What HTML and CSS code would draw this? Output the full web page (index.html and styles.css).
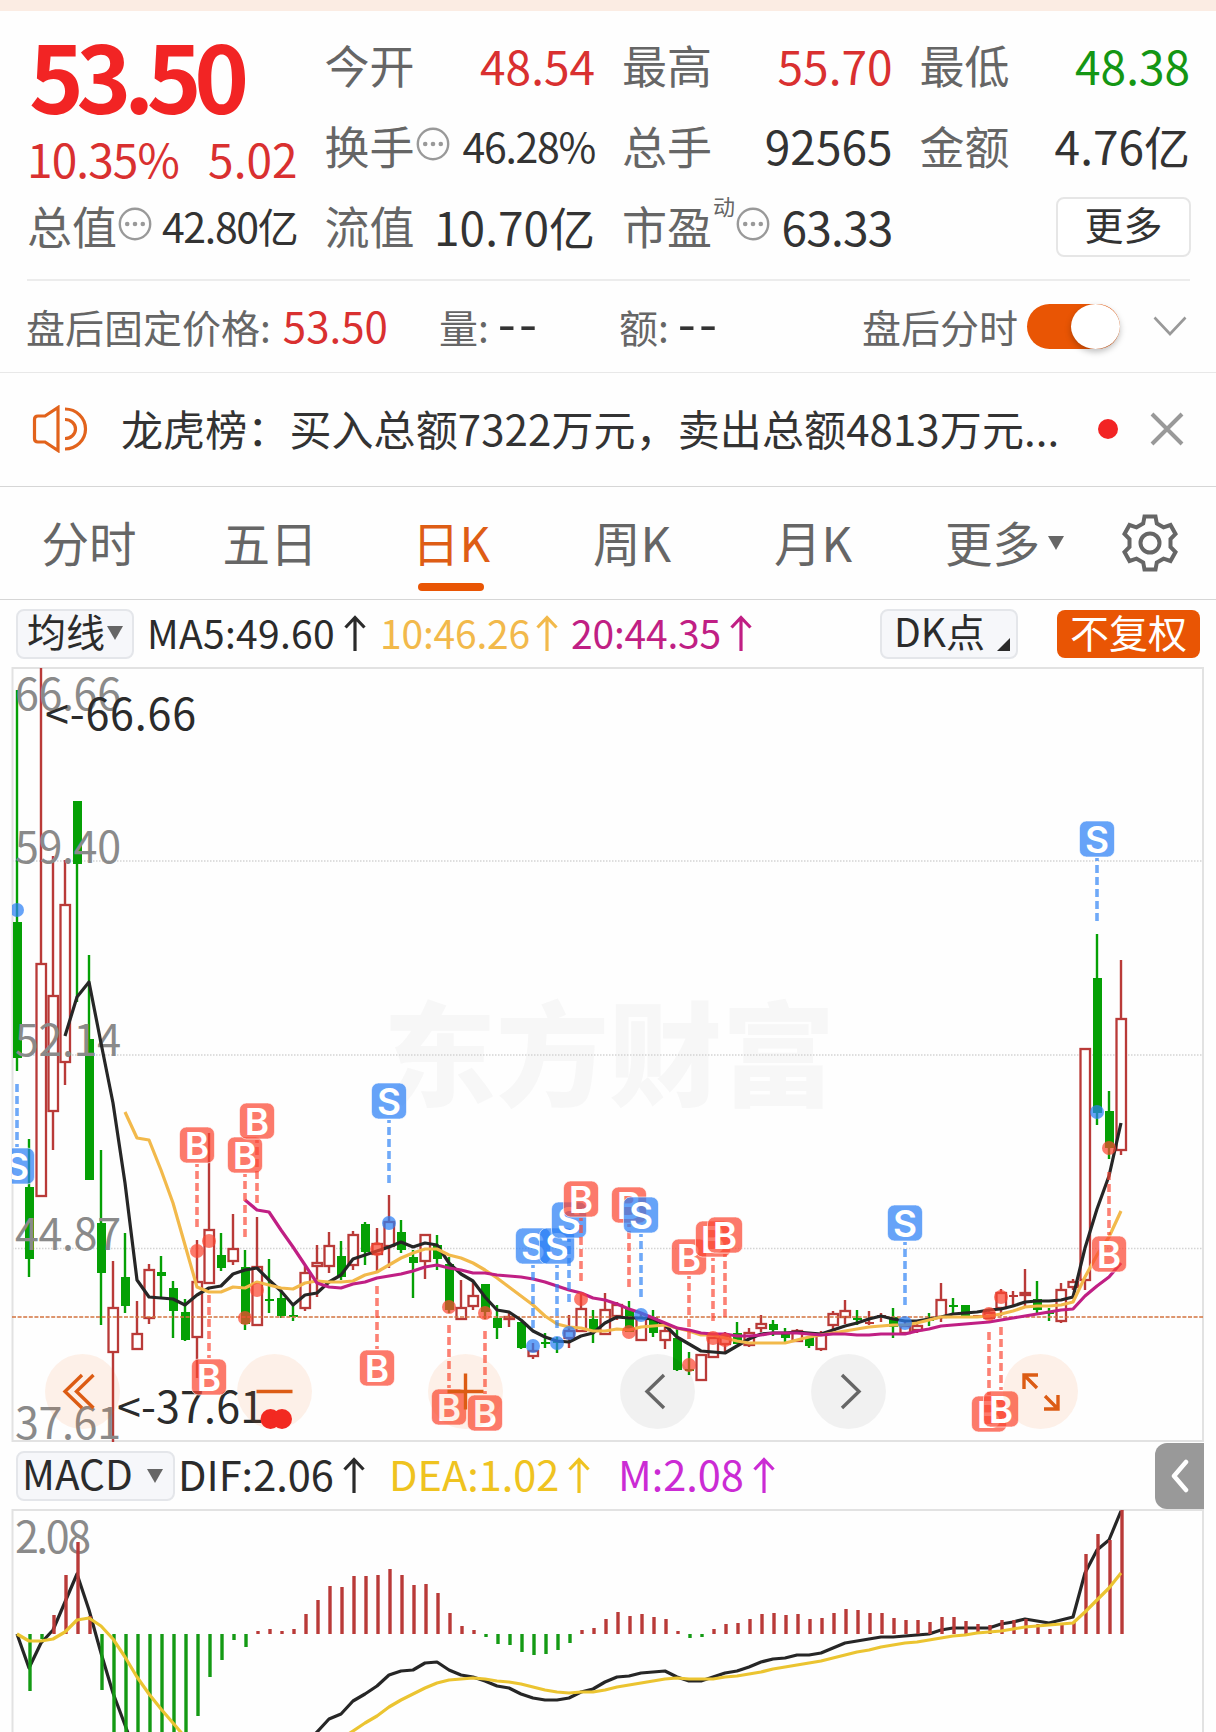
FILE: index.html
```html
<!DOCTYPE html>
<html lang="zh-CN">
<head>
  <meta charset="UTF-8" />
  <meta name="viewport" content="width=device-width, initial-scale=1.0"/>
  <title>日K</title>
  <link rel="stylesheet" href="styles.css">
</head>
<body>

  <!-- Shared icons -->
  <svg class="defs" width="0" height="0">
    <symbol id="i-more" viewBox="0 0 34 34">
      <circle cx="17" cy="17" r="15.2" fill="none" stroke="#999" stroke-width="2.4"/>
      <circle cx="9.2" cy="17" r="2.3" fill="#999"/><circle cx="17" cy="17" r="2.3" fill="#999"/><circle cx="24.8" cy="17" r="2.3" fill="#999"/>
    </symbol>
    <symbol id="i-up" viewBox="0 0 22 36">
      <path d="M11 36V3M1.5 12.5L11 2.5L20.5 12.5" fill="none" stroke="currentColor" stroke-width="3.2"/>
    </symbol>
  </svg>

  <div class="top-strip"></div>

  <!-- Quote -->
  <section class="quote">
    <div class="price-box">
      <div class="price">53.50</div>
      <div class="change"><span>10.35%</span><span>5.02</span></div>
    </div>
    <div class="cell"><span class="label">今开</span><span class="red">48.54</span></div>
    <div class="cell"><span class="label">最高</span><span class="red">55.70</span></div>
    <div class="cell"><span class="label">最低</span><span class="green">48.38</span></div>
    <div class="cell"><span class="label">换手<svg class="more-icon"><use href="#i-more"/></svg></span><span class="small">46.28%</span></div>
    <div class="cell"><span class="label">总手</span><span>92565</span></div>
    <div class="cell"><span class="label">金额</span><span>4.76亿</span></div>
    <div class="cell"><span class="label">总值<svg class="more-icon"><use href="#i-more"/></svg></span><span class="small">42.80亿</span></div>
    <div class="cell"><span class="label">流值</span><span>10.70亿</span></div>
    <div class="cell"><span class="label">市盈<sup>动</sup><svg class="more-icon"><use href="#i-more"/></svg></span><span class="pe">63.33</span></div>
    <div class="cell end"><button class="more-btn">更多</button></div>
  </section>

  <!-- After hours -->
  <section class="after">
    <span class="after-price">盘后固定价格:<b>53.50</b></span>
    <span class="after-vol">量:<i>--</i></span>
    <span class="after-amt">额:<i>--</i></span>
    <span class="after-time">盘后分时</span>
    <span class="toggle"></span>
    <svg class="chevron" viewBox="0 0 34 20"><path d="M1.5 1.5L17 18L32.5 1.5" fill="none" stroke="#999" stroke-width="2.6"/></svg>
  </section>

  <!-- News -->
  <section class="news">
    <svg class="speaker" viewBox="0 0 56 48">
      <g fill="none" stroke="#e2631c" stroke-width="3.2">
        <path d="M2.500 14.500Q2.500 11 6 11H13L26 2.500V45.500L13 37H6Q2.500 37 2.500 33.500Z"/>
        <path d="M33 14.500A10.500 9.500 0 0 1 33 33.500M33 4A20.500 20 0 0 1 33 44"/>
      </g>
    </svg>
    <span class="news-text">龙虎榜：买入总额7322万元，卖出总额4813万元...</span>
    <span class="dot"></span>
    <svg class="close" viewBox="0 0 34 34"><path d="M2 2L32 32M32 2L2 32" stroke="#999" stroke-width="4"/></svg>
  </section>

  <!-- Tabs -->
  <nav class="tabs">
    <a class="tab">分时</a>
    <a class="tab">五日</a>
    <a class="tab active">日K</a>
    <a class="tab">周K</a>
    <a class="tab">月K</a>
    <a class="tab wide">更多<span class="caret"></span></a>
    <a class="gear">
      <svg viewBox="0 0 56 58">
        <g fill="none" stroke="#666" stroke-width="4">
          <path d="M22.500 2.500H33.500L34.800 9.500L41.500 13.300L48.500 11L53.500 20L48.500 25V33L53.500 38L48.500 47L41.500 44.700L34.800 48.500L33.500 55.500H22.500L21.200 48.500L14.500 44.700L7.500 47L2.500 38L7.500 33V25L2.500 20L7.500 11L14.500 13.300L21.200 9.500Z"/>
          <circle cx="28" cy="29" r="9.500"/>
        </g>
      </svg>
    </a>
  </nav>

  <!-- Moving averages -->
  <div class="indicator ma">
    <span class="pill">均线<span class="caret"></span></span>
    <span class="ma5">MA5:49.60<svg class="up"><use href="#i-up"/></svg></span>
    <span class="ma10">10:46.26<svg class="up"><use href="#i-up"/></svg></span>
    <span class="ma20">20:44.35<svg class="up"><use href="#i-up"/></svg></span>
    <span class="pill dk">DK点<span class="corner"></span></span>
    <span class="pill fq">不复权</span>
  </div>

  <!-- Candles -->
  <div class="chart">
    <svg id="kline" width="1216" height="775" viewBox="0 667 1216 775"></svg>
    <div class="tools">
      <span class="tool"><svg viewBox="0 0 75 75"><path d="M37 21L20 37.500L37 54M48.500 21L31.500 37.500L48.500 54"/></svg></span>
      <span class="tool"><svg viewBox="0 0 75 75"><path d="M19.500 37.500H55.500"/></svg></span>
      <span class="tool"><svg viewBox="0 0 75 75"><path d="M19.500 37.500H55.500M37.500 19.500V55.500"/></svg></span>
      <span class="tool gray"><svg viewBox="0 0 75 75"><path d="M44 21L27 37.500L44 54"/></svg></span>
      <span class="tool gray"><svg viewBox="0 0 75 75"><path d="M31 21L48 37.500L31 54"/></svg></span>
      <span class="tool"><svg viewBox="0 0 75 75"><path d="M35 21H21V35M21 21L34 34M41 55H55V41M55 55L42 42"/></svg></span>
    </div>
  </div>

  <!-- MACD -->
  <div class="indicator macd">
    <span class="pill">MACD<span class="caret"></span></span>
    <span class="dif">DIF:2.06<svg class="up"><use href="#i-up"/></svg></span>
    <span class="dea">DEA:1.02<svg class="up"><use href="#i-up"/></svg></span>
    <span class="m">M:2.08<svg class="up"><use href="#i-up"/></svg></span>
    <span class="drawer"><svg viewBox="0 0 20 34"><path d="M16 3L4 17L16 31" fill="none" stroke="#fff" stroke-width="4.500" stroke-linecap="round" stroke-linejoin="round"/></svg></span>
  </div>
  <svg id="macd" width="1216" height="223" viewBox="0 1509 1216 223"></svg>

  <script src="chart.js"></script>
</body>
</html>
```

FILE: styles.css
```css
* {
  box-sizing: border-box;
}

body {
  margin: 0;
  width: 1216px;
  height: 1732px;
  overflow: hidden;
  background: #fefefe;
  color: #333;
  font-family: "Noto Sans CJK SC", sans-serif;
  line-height: 1;
}

svg {
  display: block;
  flex: none;
}

.defs {
  position: absolute;
}

.top-strip {
  height: 11px;
  background: #fbece3;
}

.red {
  color: #d93030;
}

.green {
  color: #149614;
}

/* Quote */
.quote {
  display: grid;
  grid-template-columns: repeat(4, 1fr);
  grid-template-rows: 81px 80px 81px;
  column-gap: 27px;
  height: 270px;
  margin: 0 26px 0 27px;
  padding-top: 16px;
  border-bottom: 2px solid #ececec;
}

.price-box {
  grid-row: span 2;
}

.price {
  height: 102px;
  padding-left: 2px;
  font-size: 93px;
  font-weight: 700;
  line-height: 94px;
  letter-spacing: -7.4px;
  color: #f22424;
}

.change {
  display: flex;
  justify-content: space-between;
  font-size: 46px;
  line-height: 59px;
  color: #d93030;
}

.change span:first-child {
  letter-spacing: -0.9px;
}

.cell {
  display: flex;
  justify-content: space-between;
  align-items: center;
  padding-bottom: 6px;
  font-size: 46px;
  white-space: nowrap;
}

.cell .small {
  font-size: 41px;
  letter-spacing: -1.3px;
}

.cell .pe {
  letter-spacing: -0.8px;
}

.label {
  display: flex;
  align-items: center;
  font-size: 45px;
  color: #666;
}

.label sup {
  align-self: flex-start;
  margin: -9px 0 0 1px;
  font-size: 22px;
  line-height: 22px;
}

.more-icon {
  width: 34px;
  height: 34px;
  margin: -3px 0 0 1px;
}

.end {
  justify-content: flex-end;
}

.more-btn {
  width: 135px;
  height: 60px;
  margin: 2px -1px 0 0;
  padding: 0 0 8px;
  border: 2px solid #e6e6e6;
  border-radius: 8px;
  background: #fff;
  color: #333;
  font: 39px/48px "Noto Sans CJK SC", sans-serif;
}

/* After hours */
.after {
  display: flex;
  align-items: center;
  height: 92px;
  padding: 0 0 2px 26px;
  border-bottom: 1px solid #e8e8e8;
  font-size: 39px;
  line-height: 50px;
  color: #666;
  white-space: nowrap;
}

.after b {
  margin-left: 12px;
  font-size: 42px;
  line-height: 40px;
  font-weight: 400;
  color: #d93030;
}

.after i {
  margin-left: 9px;
  font-style: normal;
  letter-spacing: 3px;
  color: #333;
  font-size: 52px;
  line-height: 30px;
}

.after-price {
  width: 413px;
}

.after-vol {
  width: 180px;
}

.after-amt {
  width: 243px;
}

.toggle {
  display: flex;
  justify-content: flex-end;
  width: 93px;
  height: 45px;
  margin: 2px 0 0 9px;
  border-radius: 23px;
  background: #e95504;
}

.toggle::after {
  content: "";
  width: 49px;
  height: 45px;
  border-radius: 50%;
  background: #fff;
  box-shadow: 0 3px 6px rgba(0, 0, 0, 0.25);
}

.chevron {
  width: 34px;
  height: 20px;
  margin-left: 33px;
}

/* News */
.news {
  display: flex;
  align-items: center;
  height: 114px;
  padding: 0 0 2px 32px;
  border-bottom: 1px solid #d6d6d6;
  font-size: 42px;
  white-space: nowrap;
}

.speaker {
  width: 56px;
  height: 48px;
}

.news-text {
  width: 977px;
  margin: -2px 0 0 33px;
  letter-spacing: 0.1px;
}

.dot {
  width: 20px;
  height: 20px;
  border-radius: 50%;
  background: #f22424;
}

.close {
  width: 34px;
  height: 34px;
  margin-left: 32px;
}

/* Tabs */
.tabs {
  display: flex;
  height: 113px;
  border-bottom: 1px solid #d6d6d6;
  font-size: 47.5px;
  color: #666;
}

.tab {
  display: flex;
  flex-direction: column;
  align-items: center;
  width: 181px;
  padding: 31px 3px 0 0;
}

.tab.active {
  color: #de5d15;
}

.tab.active::after {
  content: "";
  width: 66px;
  height: 8px;
  margin-top: 17px;
  border-radius: 4px;
  background: #e95504;
}

.tab.wide {
  flex-direction: row;
  align-items: flex-start;
  justify-content: center;
  width: 202px;
}

.caret {
  border: 8px solid transparent;
  border-top: 14px solid #666;
  border-bottom: 0;
}

.tab .caret {
  margin: 18px 0 0 8px;
}

.gear {
  padding: 27px 0 0 15px;
}

.gear svg {
  width: 56px;
  height: 58px;
}

/* Indicator rows */
.indicator {
  display: flex;
  align-items: center;
  height: 67px;
  padding-left: 16px;
  font-size: 39px;
  white-space: nowrap;
}

.indicator > span {
  display: flex;
  align-items: center;
  flex: none;
  padding-bottom: 3px;
}

.indicator .pill {
  height: 50px;
  padding: 0 0 6px 9px;
  border: 2px solid #e4e6ea;
  border-radius: 8px;
  background: #f6f7fa;
  color: #2b2b2b;
}

.up {
  width: 22px;
  height: 36px;
  margin: 2px 0 0 9px;
}

.ma .pill {
  width: 118px;
}

.pill .caret {
  margin: 5px 0 0 2px;
}

.ma5 {
  width: 233px;
  margin-left: 13px;
  letter-spacing: 0.3px;
  color: #2b2b2b;
}

.ma10 {
  width: 191px;
  letter-spacing: -0.2px;
  color: #f2b94b;
}

.ma10 .up {
  margin-left: 6px;
}

.ma20 {
  width: 309px;
  letter-spacing: -0.2px;
  color: #c01f84;
}

.ma .dk {
  width: 138px;
  padding-left: 12px;
}

.corner {
  margin: 28px 0 0 12px;
  border-left: 13px solid transparent;
  border-bottom: 13px solid #2b2b2b;
}

.ma .fq {
  justify-content: center;
  width: 143px;
  height: 48px;
  margin-left: 39px;
  padding: 0 0 4px;
  border: 0;
  background: #e95504;
  color: #fff;
}

.macd {
  font-size: 41.5px;
}

.macd .pill {
  width: 159px;
  padding: 0 0 5px 4px;
  font-size: 40.5px;
}

.macd .caret {
  margin-left: 14px;
}

.dif {
  width: 211px;
  margin-left: 3px;
  color: #2b2b2b;
}

.dea {
  width: 229px;
  color: #efc320;
}

.m {
  width: 537px;
  color: #cb2bd4;
}

.indicator .drawer {
  justify-content: center;
  width: 49px;
  height: 66px;
  padding: 0;
  border-radius: 12px 0 0 12px;
  background: #999;
}

.drawer svg {
  width: 20px;
  height: 34px;
}

/* Chart */
.chart {
  position: relative;
  height: 775px;
}

.tools {
  position: absolute;
  left: 45px;
  top: 687px;
  display: flex;
  gap: 116.6px;
}

.tool {
  width: 75px;
  height: 75px;
  border-radius: 50%;
  background: rgba(240, 95, 15, 0.09);
}

.tool.gray {
  background: rgba(0, 0, 0, 0.05);
}

.tool path {
  fill: none;
  stroke: #dc5c14;
  stroke-width: 3.4;
}

.tool.gray path {
  stroke: #666;
}

.axis {
  font-size: 43px;
  fill: #8a8a8a;
}

.mark {
  font-size: 43px;
  fill: #2b2b2b;
}

.watermark {
  font-size: 113px;
  font-weight: 900;
  fill: #f7f7f7;
}

.badge-text {
  font: 600 37px Inter, sans-serif;
  fill: #fff;
  text-anchor: middle;
}
```

FILE: chart.js
```js
const RED = '#b93a38';
const GREEN = '#05a005';
const x = i => 17 + 12 * i;

// [up, high, body top, body bottom, low]
const candles = [
  [0,690,922,1058,1071],[0,1139,1187,1259,1277],[1,668,963,1197,1197],[1,856,995,1112,1150],[1,860,904,1063,1085],
  [0,801,801,864,1002],[0,955,1039,1180,1180],[0,1150,1223,1273,1325],[1,1261,1307,1353,1442],[0,1233,1277,1306,1313],
  [1,1301,1333,1350,1350],[1,1264,1269,1319,1324],[0,1256,1272,1276,1297],[0,1281,1288,1311,1338],[0,1299,1312,1340,1341],
  [1,1240,1281,1338,1378],[1,1133,1229,1284,1284],[0,1233,1255,1268,1271],[1,1214,1248,1262,1265],[0,1250,1267,1324,1330],
  [1,1217,1266,1326,1326],[0,1259,1299,1301,1313],[0,1290,1298,1316,1318],[0,1305,1315,1317,1321],[1,1266,1272,1309,1311],
  [1,1245,1262,1267,1297],[1,1232,1245,1267,1273],[0,1241,1256,1277,1280],[1,1231,1234,1266,1270],[0,1222,1224,1252,1265],
  [1,1228,1243,1255,1271],[1,1195,1221,1247,1268],[0,1220,1232,1250,1253],[0,1250,1257,1263,1298],[1,1234,1234,1262,1279],
  [0,1235,1245,1259,1270],[0,1257,1264,1310,1313],[1,1280,1307,1320,1320],[1,1282,1295,1307,1310],[0,1284,1284,1312,1319],
  [0,1305,1318,1328,1339],[1,1313,1316,1320,1327],[0,1322,1322,1348,1349],[1,1343,1350,1357,1359],[0,1333,1342,1344,1348],
  [0,1337,1341,1343,1353],[1,1315,1330,1339,1348],[1,1293,1308,1332,1332],[0,1310,1319,1330,1343],[1,1293,1309,1335,1335],
  [1,1302,1304,1317,1320],[0,1301,1309,1332,1332],[1,1313,1317,1341,1341],[0,1310,1317,1333,1337],[1,1327,1330,1341,1349],
  [0,1329,1338,1370,1371],[0,1352,1369,1371,1375],[1,1354,1354,1381,1381],[1,1337,1337,1358,1358],[1,1332,1335,1345,1352],
  [0,1322,1333,1344,1344],[1,1328,1332,1346,1347],[1,1315,1323,1329,1332],[0,1320,1324,1330,1336],[0,1328,1333,1338,1342],
  [1,1329,1330,1342,1342],[0,1337,1337,1346,1348],[1,1331,1333,1350,1351],[1,1311,1313,1326,1329],[1,1300,1310,1318,1324],
  [0,1310,1318,1320,1325],[1,1311,1322,1323,1325],[1,1313,1315,1317,1322],[0,1308,1317,1327,1338],[1,1322,1325,1334,1334],
  [1,1323,1325,1331,1333],[0,1313,1319,1320,1326],[1,1283,1299,1318,1322],[0,1298,1305,1307,1313],[0,1305,1305,1317,1317],
  [1,1315,1315,1317,1317],[1,1311,1312,1319,1319],[1,1289,1292,1309,1316],[1,1291,1295,1297,1306],[1,1269,1292,1296,1306],
  [0,1281,1299,1310,1314],[0,1308,1312,1313,1321],[1,1283,1289,1322,1323],[1,1279,1281,1288,1290],[1,1048,1048,1281,1290],
  [0,934,978,1113,1125],[0,1091,1111,1148,1159],[1,960,1018,1151,1155]
];

const ma5 = [1036,997,982,1043,1103,1183,1280,1297,1298,1299,1305,1295,1288,1286,1274,1270,1268,1280,1291,1305,1295,1293,1282,1275,1259,1255,1251,1247,1242,1247,1243,1245,1263,1274,1281,1297,1310,1312,1320,1331,1337,1341,1342,1336,1333,1323,1317,1318,1318,1319,1325,1337,1344,1351,1352,1353,1346,1339,1334,1333,1333,1332,1333,1334,1330,1326,1323,1319,1316,1319,1321,1321,1319,1317,1314,1313,1312,1310,1309,1306,1302,1301,1301,1300,1297,1248,1209,1176,1123];
const ma10 = [1112,1138,1140,1170,1203,1245,1287,1292,1292,1287,1288,1282,1285,1288,1289,1283,1281,1282,1282,1281,1275,1272,1265,1258,1253,1249,1249,1255,1258,1263,1270,1278,1287,1296,1305,1316,1324,1327,1328,1331,1331,1329,1330,1327,1326,1325,1328,1331,1335,1335,1338,1341,1343,1343,1343,1343,1340,1337,1335,1333,1331,1329,1327,1326,1325,1325,1323,1320,1317,1317,1317,1317,1316,1314,1311,1307,1306,1306,1305,1302,1277,1255,1237,1211];
const ma20 = [1200,1210,1212,1230,1247,1265,1283,1287,1288,1284,1282,1278,1276,1274,1271,1267,1265,1268,1270,1273,1273,1275,1276,1277,1279,1282,1286,1290,1293,1298,1300,1304,1309,1313,1318,1323,1328,1330,1333,1334,1334,1336,1336,1335,1333,1333,1333,1334,1335,1334,1334,1335,1335,1334,1334,1334,1331,1329,1326,1325,1324,1323,1322,1320,1318,1316,1314,1312,1310,1309,1296,1286,1277,1263];

// [index, type, badge y, dot y] - the dashes run from the badge towards the dot
const trades = [
  [0,'S',1166,910],[15,'B',1145,1251],[16,'B',1377,1241],[19,'B',1155,1318],[20,'B',1121,1290],[31,'S',1101,1223],[30,'B',1368,1249],
  [36,'B',1407,1307],[39,'B',1413,1313],[43,'S',1246,1346],[45,'S',1246,1343],[46,'S',1220,1333],[47,'B',1199,1299],
  [51,'B',1205,1332],[52,'S',1215,1315],[56,'B',1257,1365],[58,'B',1239,1338],[59,'B',1235,1340],[74,'S',1223,1323],
  [81,'B',1414,1314],[82,'B',1409,1297],[90,'S',839,1112],[91,'B',1254,1148]
];

const line = (start, ys, color) =>
  `<polyline points="${ys.map((y, i) => x(start + i) + ',' + y).join(' ')}" fill="none" stroke="${color}" stroke-width="3.2" stroke-linejoin="round"/>`;

function drawKline() {
  let s = '<defs><clipPath id="frame"><rect x="12" y="667" width="1192" height="776"/></clipPath></defs>';
  s += '<text class="watermark" x="383" y="1097">东方财富</text>';
  [861, 1055, 1248.5].forEach(y => {
    s += `<path d="M12 ${y}H1203" stroke="#d4d4d4" stroke-width="1.5" stroke-dasharray="1.5 1.5"/>`;
  });
  s += '<path d="M12.5 1441V668H1203V1441Z" fill="none" stroke="#e2e2e2" stroke-width="2"/>';

  candles.forEach(([up, high, top, bottom, low], i) => {
    const c = up ? RED : GREEN;
    const cx = x(i);
    s += `<path d="M${cx} ${high}V${top}M${cx} ${bottom}V${low}" stroke="${c}" stroke-width="2.4"/>`;
    if (up && bottom - top > 3) {
      s += `<rect x="${cx - 4.5}" y="${top + 1}" width="9.5" height="${bottom - top - 2}" fill="#fff" stroke="${c}" stroke-width="2.3"/>`;
    } else {
      s += `<rect x="${cx - 4}" y="${top}" width="9" height="${Math.max(bottom - top, 2)}" fill="${c}"/>`;
    }
  });
  s += '<path d="M12 1317H1203" stroke="#d2733f" stroke-width="1.4" stroke-dasharray="4 1.6"/>';
  [['66.66', 710], ['59.40', 863], ['52.14', 1056], ['44.87', 1250], ['37.61', 1439]].forEach(([t, y]) => {
    s += `<text class="axis" x="15" y="${y}" textLength="106">${t}</text>`;
  });
  s += line(4, ma5, '#262626') + line(9, ma10, '#f2b94b') + line(19, ma20, '#c01f84');
  s += '<text class="mark" x="45" y="730" textLength="151">&lt;-66.66</text>';
  s += '<text class="mark" x="117" y="1423" textLength="147">&lt;-37.61</text>';
  s += '<g fill="#f22424"><circle cx="270.500" cy="1419" r="10"/><circle cx="282" cy="1419" r="10"/></g>';

  s += '<g clip-path="url(#frame)">';
  trades.forEach(([i, type, by, dy]) => {
    const c = type === 'S' ? '#2b80f5' : '#fb4632';
    const below = i === 0 || [16, 30, 36, 39, 81, 82, 91].includes(i);
    const d = below ? -1 : 1;
    const cx = x(i);
    s += `<circle cx="${cx}" cy="${dy}" r="7" fill="${c}" fill-opacity="0.72"/>`;
    s += `<path d="M${cx} ${by + 82 * d}V${by + 19 * d}" stroke="${c}" stroke-opacity="0.68" stroke-width="3.600" stroke-dasharray="8 4"/>`;
    s += `<rect x="${cx - 17.5}" y="${by - 18}" width="35" height="36" rx="7" fill="${c}" fill-opacity="0.72" stroke="#fff" stroke-opacity="0.6"/>`;
    s += `<text class="badge-text" x="${cx}" y="${by + 13.5}">${type}</text>`;
  });
  s += '</g>';
  document.getElementById('kline').innerHTML = s;
}

const bars = [1634,1691,1639,1615,1575,1542,1616,1690,1740,1740,1740,1740,1740,1740,1740,1716,1677,1660,1640,1647,1631,1629,1631,1629,1614,1600,1586,1587,1576,1576,1575,1569,1575,1585,1584,1593,1613,1626,1630,1637,1644,1645,1652,1655,1654,1650,1643,1630,1628,1619,1612,1616,1614,1617,1619,1631,1638,1637,1629,1624,1623,1619,1614,1613,1615,1614,1619,1618,1613,1609,1610,1613,1613,1618,1620,1620,1622,1617,1617,1621,1624,1625,1620,1620,1619,1624,1629,1625,1622,1554,1534,1540,1510];
const dif = [1634,1668,1643,1630,1602,1574,1610,1653,1693,1725,1757,1780,1795,1805,1810,1812,1812,1808,1803,1797,1790,1780,1770,1758,1745,1732,1719,1714,1701,1694,1686,1675,1671,1670,1663,1662,1670,1675,1677,1681,1686,1688,1694,1698,1700,1700,1698,1692,1689,1682,1677,1676,1673,1672,1671,1677,1681,1681,1677,1673,1671,1667,1662,1659,1658,1655,1655,1653,1648,1643,1641,1639,1637,1637,1636,1635,1634,1630,1628,1628,1628,1628,1624,1622,1619,1621,1623,1620,1617,1573,1550,1540,1511];
const dea = [1634,1641,1641,1639,1632,1620,1618,1626,1639,1657,1677,1694,1709,1723,1737,1748,1758,1765,1770,1773,1774,1773,1771,1767,1761,1754,1747,1739,1731,1723,1716,1707,1700,1694,1688,1683,1680,1679,1678,1679,1681,1682,1684,1687,1690,1692,1693,1692,1692,1690,1687,1685,1683,1681,1679,1678,1679,1679,1679,1677,1676,1674,1672,1669,1667,1665,1663,1661,1658,1655,1652,1650,1647,1645,1643,1642,1640,1638,1636,1635,1633,1632,1631,1629,1627,1626,1625,1624,1623,1612,1600,1588,1573];

function drawMacd() {
  let s = '<path d="M12.5 1740V1510H1203V1740" fill="none" stroke="#e2e2e2" stroke-width="2"/>';
  s += '<text class="axis" x="15" y="1553" textLength="76">2.08</text>';
  s += line(0, dif, '#262626');
  bars.forEach((y, i) => {
    s += `<path d="M${x(i) + 1} 1634V${y}" stroke="${y < 1634 ? RED : '#149a14'}" stroke-width="3.400"/>`;
  });
  s += line(0, dea, '#ebc431');
  document.getElementById('macd').innerHTML = s;
}

drawKline();
drawMacd();
```
